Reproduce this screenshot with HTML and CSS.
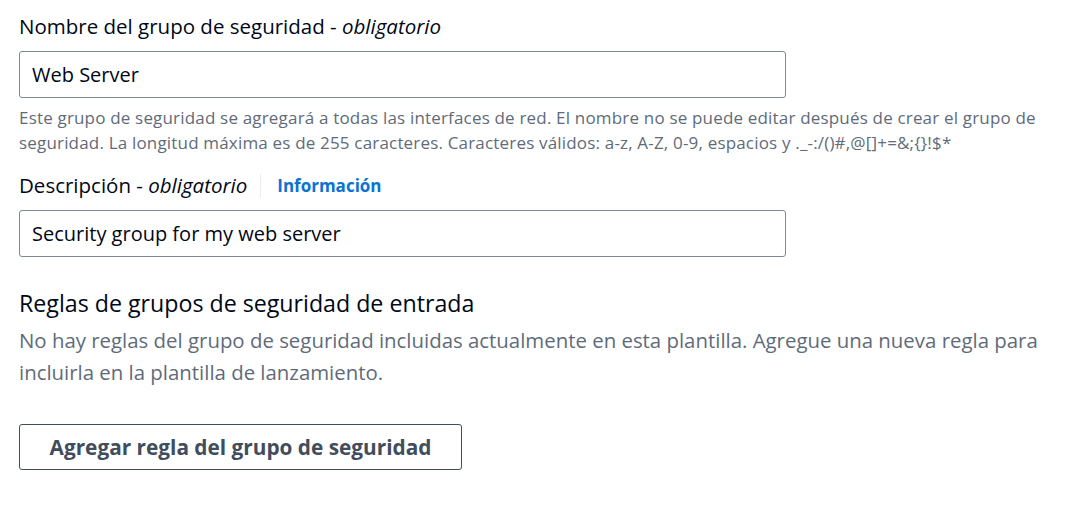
FILE: index.html
```html
<!DOCTYPE html>
<html lang="es">
<head>
<meta charset="utf-8">
<title>Grupo de seguridad</title>
<link rel="stylesheet" href="styles.css">
</head>
<body>
<main class="form">
  <div class="field">
    <label class="label">Nombre del grupo de seguridad - <i>obligatorio</i></label>
    <div class="input">Web Server</div>
    <p class="help">Este grupo de seguridad se agregará a todas las interfaces de red. El nombre no se puede editar después de crear el grupo de seguridad. La longitud máxima es de 255 caracteres. Caracteres válidos: a-z, A-Z, 0-9, espacios y ._-:/()#,@[]+=&amp;;{}!$*</p>
  </div>
  <div class="field field-2">
    <div class="label-row">
      <label class="label">Descripción - <i>obligatorio</i></label>
      <span class="divider"></span>
      <a class="info">Información</a>
    </div>
    <div class="input">Security group for my web server</div>
  </div>
  <section class="rules">
    <h2 class="heading">Reglas de grupos de seguridad de entrada</h2>
    <p class="desc">No hay reglas del grupo de seguridad incluidas actualmente en esta plantilla. Agregue una nueva regla para incluirla en la plantilla de lanzamiento.</p>
    <button class="btn">Agregar regla del grupo de seguridad</button>
  </section>
</main>
</body>
</html>
```
FILE: styles.css
```css
html, body {
  margin: 0;
  background: #ffffff;
}
body {
  font-family: "Open Sans", "Noto Sans", sans-serif;
  color: #000716;
}
.form {
  padding: 12px 0 0 19px;
  width: 1045px;
  display: flex;
  flex-direction: column;
}
.field {
  display: flex;
  flex-direction: column;
}
.label {
  font-size: 20.5px;
  line-height: 28px;
  color: #000716;
}
.label i {
  font-style: italic;
}
.input {
  box-sizing: border-box;
  width: 767px;
  height: 47px;
  margin-top: 11px;
  border: 1px solid #7d8998;
  border-radius: 3px;
  padding: 0 12px;
  display: flex;
  align-items: center;
  font-size: 20px;
  color: #000716;
}
.help {
  margin: 7px 0 0;
  font-size: 17px;
  letter-spacing: 0.18px;
  line-height: 25px;
  color: #5f6b7a;
}
.field-2 {
  margin-top: 16px;
}
.label-row {
  display: flex;
  align-items: center;
  height: 28px;
}
.divider {
  width: 1px;
  height: 23px;
  background: #e9ebed;
  margin: 0 16px 0 13px;
}
.info {
  font-size: 17px;
  font-weight: 700;
  color: #0972d3;
}
.rules {
  margin-top: 31px;
  display: flex;
  flex-direction: column;
  align-items: flex-start;
}
.heading {
  margin: 0;
  font-size: 23.2px;
  font-weight: 400;
  line-height: 30px;
  color: #000716;
}
.desc {
  margin: 6px 0 0;
  font-size: 20.4px;
  line-height: 32px;
  color: #5f6b7a;
}
.btn {
  margin-top: 36px;
  box-sizing: border-box;
  width: 443px;
  height: 46px;
  border: 1px solid #414d5c;
  border-radius: 3px;
  background: #ffffff;
  font-family: inherit;
  font-size: 20.8px;
  font-weight: 700;
  color: #414d5c;
  padding: 0;
}
```
